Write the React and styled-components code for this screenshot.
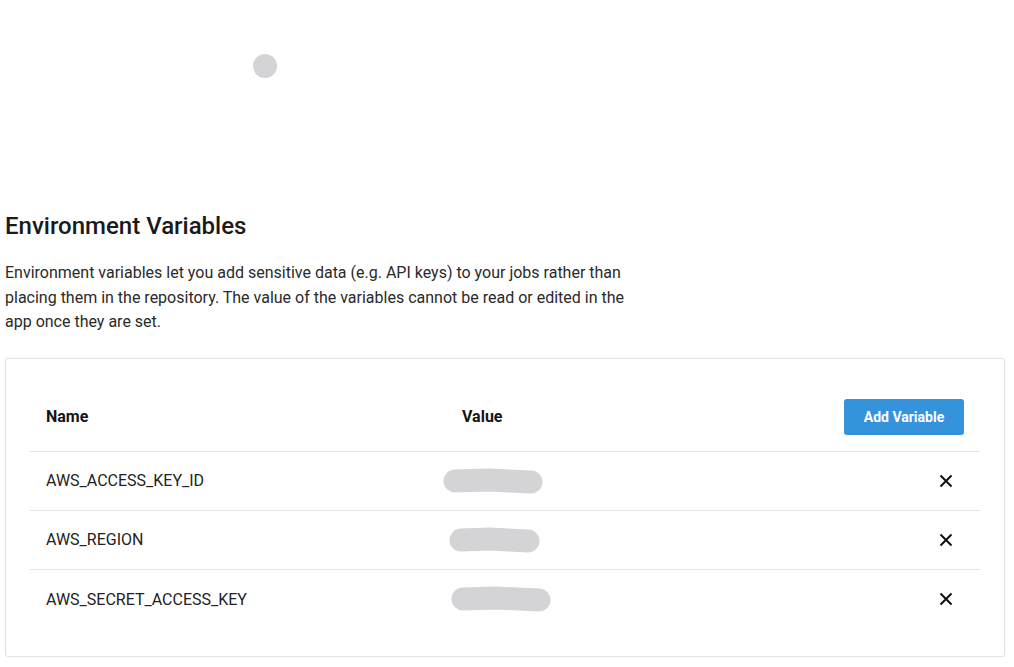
import styled, { createGlobalStyle } from 'styled-components';

const variables = [
  { name: 'AWS_ACCESS_KEY_ID', blob: { width: 100, offset: -19 } },
  { name: 'AWS_REGION', blob: { width: 91, offset: -13 } },
  { name: 'AWS_SECRET_ACCESS_KEY', blob: { width: 100, offset: -11 } },
];

const GlobalStyle = createGlobalStyle`
  body {
    margin: 0;
    background: #ffffff;
    font-family: Roboto, "Liberation Sans", Arial, sans-serif;
    color: #222222;
  }
`;

const Page = styled.div`
  padding: 0 9px 0 5px;
`;

const Top = styled.div`
  height: 200px;
  padding: 54px 0 0 248px;
  box-sizing: border-box;
`;

const Spinner = styled.div`
  width: 24px;
  height: 24px;
  border-radius: 50%;
  background: #d4d4d6;
`;

const Title = styled.h2`
  margin: 12px 0 0;
  font-size: 24px;
  font-weight: 500;
  line-height: 28px;
  color: #1a1a1a;
`;

const Intro = styled.p`
  margin: 21px 0 0;
  max-width: 630px;
  font-size: 16px;
  line-height: 24.5px;
  color: #2a2a2a;
`;

const Card = styled.section`
  margin-top: 23px;
  padding: 24px 24px 27px;
  border: 1px solid #e2e2e2;
  border-radius: 3px;
  box-shadow: 0 1px 3px rgba(0, 0, 0, 0.04);
  background: #fff;
`;

const Table = styled.div`
  display: grid;
  grid-template-columns: 416px 1fr auto;
`;

const Row = styled.div`
  display: contents;

  & > div {
    height: ${(p) => (p.$head ? 69 : 59)}px;
    border-bottom: ${(p) => (p.$last ? 'none' : '1px solid #e2e2e2')};
  }
`;

const Cell = styled.div`
  display: flex;
  align-items: center;
  padding: 0 16px;
  box-sizing: border-box;
  font-size: 16px;
  font-weight: ${(p) => (p.$bold ? 700 : 400)};
  color: ${(p) => (p.$bold ? '#151515' : '#222')};
  justify-content: ${(p) => (p.$end ? 'flex-end' : 'flex-start')};
`;

const AddButton = styled.button`
  width: 120px;
  height: 36px;
  border: none;
  border-radius: 3px;
  background: #3593dc;
  color: #fff;
  font-family: Roboto, "Liberation Sans", Arial, sans-serif;
  font-size: 14px;
  font-weight: 700;
  cursor: pointer;
`;

const DeleteButton = styled.button`
  display: flex;
  align-items: center;
  justify-content: center;
  width: 24px;
  height: 24px;
  margin-right: 6px;
  padding: 0;
  border: none;
  background: none;
  cursor: pointer;
`;

const Redacted = ({ width, offset }) => (
  <svg
    width={width}
    height={26}
    viewBox={`0 0 ${width} 26`}
    style={{ marginLeft: offset }}
  >
    <path
      d={`M12 13 L${width * 0.45} 12 L${width - 12} 14`}
      stroke="#d4d4d6"
      strokeWidth="23"
      strokeLinecap="round"
      strokeLinejoin="round"
      fill="none"
    />
  </svg>
);

const CloseIcon = () => (
  <svg width="14" height="14" viewBox="0 0 14 14">
    <path d="M1.5 1.5 L12.5 12.5 M12.5 1.5 L1.5 12.5" stroke="#111" strokeWidth="2" />
  </svg>
);

function App() {
  return (
    <Page>
      <GlobalStyle />
      <Top>
        <Spinner />
      </Top>
      <Title>Environment Variables</Title>
      <Intro>
        Environment variables let you add sensitive data (e.g. API keys) to your jobs rather than
        placing them in the repository. The value of the variables cannot be read or edited in the
        app once they are set.
      </Intro>
      <Card>
        <Table>
          <Row $head>
            <Cell $bold>Name</Cell>
            <Cell $bold>Value</Cell>
            <Cell $end>
              <AddButton>Add Variable</AddButton>
            </Cell>
          </Row>
          {variables.map((v, i) => (
            <Row key={v.name} $last={i === variables.length - 1}>
              <Cell>{v.name}</Cell>
              <Cell>
                <Redacted width={v.blob.width} offset={v.blob.offset} />
              </Cell>
              <Cell $end>
                <DeleteButton aria-label={`Delete ${v.name}`}>
                  <CloseIcon />
                </DeleteButton>
              </Cell>
            </Row>
          ))}
        </Table>
      </Card>
    </Page>
  );
}

export default App;
